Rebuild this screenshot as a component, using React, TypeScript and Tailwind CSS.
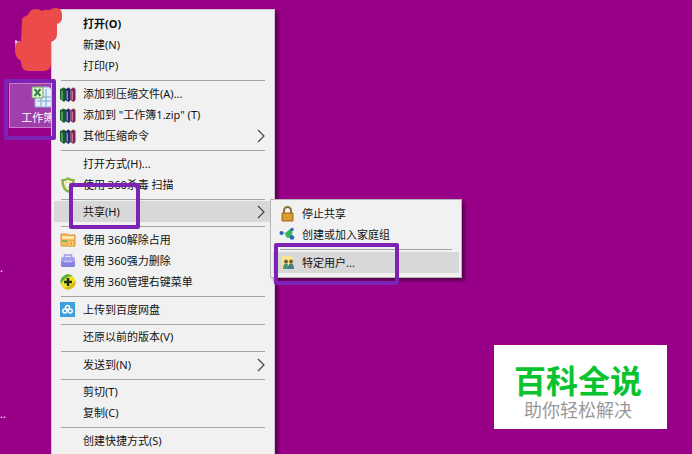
import React from "react";

type IconName = "books" | "shield" | "folder" | "shredder" | "plus" | "cloud" | "lock" | "network" | "users";

function Icon({ name }: { name: IconName }) {
  const common = { viewBox: "0 0 16 16", className: "size-4 shrink-0", "aria-hidden": true } as const;
  switch (name) {
    case "books":
      return (
        <svg {...common}>
          <path d="M0 3l4-2 2 2v11l-2 2-4-3z" fill="#1c5c2b" />
          <path d="M1 4l2 1.500v9L1 13z" fill="#4c9a55" />
          <path d="M5.500 3l3-2 2 2v11l-2 2-3-2z" fill="#20296c" />
          <path d="M6.500 4l1.500 1.500v9L6.500 13z" fill="#7d93cf" />
          <path d="M10.500 3l3-2 2 2v11l-2 2-3-2z" fill="#762a55" />
          <path d="M11.500 4L13 5.500v9L11.500 13z" fill="#d36d94" />
          <path d="M.5 2.500L4 1l1.500 1.500M6 2.500L8.500 1 10 2.500M11 2.500L13.500 1 15 2.500" fill="none" stroke="#dfe2d6" />
        </svg>
      );
    case "shield":
      return (
        <svg {...common}>
          <path d="M8 1.500c2 1.300 3.500 1.700 5.500 1.700 0 5.500-1 9-5.500 11.300C3.500 12.200 2.500 8.700 2.500 3.200c2 0 3.500-.4 5.500-1.700z" fill="#fbfbd8" stroke="#86b54a" strokeWidth="2.500" />
          <path d="M5.500 5.500h5v3L8 11 5.500 8.500z" fill="#fff" stroke="#d9dd7a" />
        </svg>
      );
    case "folder":
      return (
        <svg {...common}>
          <path d="M1 2h6l1 1h7v11H1z" fill="#f6bd62" stroke="#dd9136" />
          <path d="M2 5.500h12" stroke="#fff3cf" strokeWidth="2" />
          <path d="M2 9h5" stroke="#82b35c" strokeWidth="2" />
          <path d="M8 9h6v5H8z" fill="#ffe7b4" stroke="#e39c31" />
          <circle cx="11" cy="11.500" r="1.500" fill="#ef9b32" />
        </svg>
      );
    case "shredder":
      return (
        <svg {...common}>
          <path d="M4.500 5V2h7v3" fill="#e9e7ff" stroke="#a39fe8" strokeWidth="1.500" />
          <rect x="1" y="4" width="14" height="10" rx="2" fill="#a4a0f0" />
          <path d="M1 9h14v3a2 2 0 0 1-2 2H3a2 2 0 0 1-2-2z" fill="#8580df" />
          <path d="M4 8.500h8" stroke="#cbc8fb" strokeWidth="1.500" />
        </svg>
      );
    case "plus":
      return (
        <svg {...common}>
          <circle cx="8" cy="8" r="7.500" fill="#f4e02a" />
          <path d="M.8 10A7.500 7.500 0 0 1 13 2.400C8 2 3.500 5 .8 10z" fill="#55ad3a" />
          <path d="M15.200 6A7.500 7.500 0 0 1 3 13.600C8 14 12.500 11 15.200 6z" fill="#d7b91d" />
          <path d="M8 4v8M4 8h8" stroke="#12321a" strokeWidth="2.500" />
        </svg>
      );
    case "cloud":
      return (
        <svg {...common}>
          <path d="M0 0h15v15H0z" fill="#3d9fdb" />
          <g fill="none" stroke="#fff" strokeWidth="1.500">
            <circle cx="7.500" cy="5.500" r="2" />
            <circle cx="4.800" cy="9" r="2" />
            <circle cx="10.200" cy="9" r="2" />
          </g>
        </svg>
      );
    case "lock":
      return (
        <svg {...common}>
          <path d="M5 8V4.500a3.500 3.500 0 0 1 7 0V8" fill="none" stroke="#8e7038" strokeWidth="2" />
          <path d="M3 7h11v8H3z" fill="#cf8c1f" stroke="#a56c18" />
          <path d="M4 9h9M4 11h9M4 13h9" stroke="#e8b04a" />
        </svg>
      );
    case "network":
      return (
        <svg {...common}>
          <path d="M2 6h6M8 7l5-4M8 8l5 3" stroke="#7fbcc9" />
          <circle cx="2.500" cy="6" r="2" fill="#2764ae" />
          <path d="M6 6.500l5-4.500 2.500 3-1 6-5-.5z" fill="#35b356" />
          <circle cx="13" cy="2.500" r="1.800" fill="#2b72b5" />
          <circle cx="13" cy="10.500" r="2.300" fill="#236ab6" />
        </svg>
      );
    case "users":
      return (
        <svg {...common}>
          <path d="M3 1h9l2 2v11H3z" fill="#f8e58e" />
          <circle cx="7" cy="6.500" r="2" fill="#6f6048" />
          <circle cx="12" cy="6.500" r="2" fill="#7a5a44" />
          <path d="M4 14c0-3.500 1-5.500 3-5.500s3 2 3 5.500z" fill="#4c9477" />
          <path d="M9 14c0-3.500 1-5.500 3-5.500s3 2 3 5.500z" fill="#417d8d" />
        </svg>
      );
  }
}

function MenuItem({ label, icon, bold, submenu, active }: { label: string; icon?: IconName; bold?: boolean; submenu?: boolean; active?: boolean }) {
  return (
    <button type="button" role="menuitem" aria-haspopup={submenu ? "menu" : undefined}
      className={`flex h-[21px] w-full items-center gap-[7px] pr-[7px] pl-[6px] text-left text-[11px] leading-4 whitespace-nowrap text-[#111] ${bold ? "font-bold" : ""} ${active ? "bg-[#d8d8d8]" : "hover:bg-[#e4e4e4]"}`}>
      <span className="flex size-4 shrink-0 items-center">{icon && <Icon name={icon} />}</span>
      <span className="grow">{label}</span>
      {submenu && (
        <svg viewBox="0 0 8 14" className="h-[14px] w-2" fill="none" stroke="#444" strokeWidth="1.200" aria-hidden="true">
          <path d="M1 1l6 6-6 6" />
        </svg>
      )}
    </button>
  );
}

function Separator({ tight }: { tight?: boolean }) {
  return (
    <div role="separator" className={`px-[7px] pt-1 ${tight ? "pb-px" : "pb-[2px]"}`}>
      <div className="h-px bg-[#a3a3a3]" />
    </div>
  );
}

function Highlight({ className }: { className: string }) {
  return <div aria-hidden="true" className={`pointer-events-none absolute rounded-xs border-4 border-[#7c22b4] ${className}`} />;
}

export default function App() {
  return (
    <main className="relative h-screen overflow-hidden bg-[#980088] font-['Noto_Sans','Noto_Sans_CJK_SC',sans-serif]">
      <button type="button" className="absolute top-[83px] left-[9px] flex h-[45px] w-16 flex-col items-center border border-[#c57fca] bg-[#a03fab] text-[11px] leading-4 text-white">
        <svg viewBox="0 0 24 24" className="size-6" aria-hidden="true">
          <path d="M8 3h12l4 4v16H6V8z" fill="#e4eefb" stroke="#8aaddc" />
          <path d="M8 13h15M8 17h15M12 9v13M17 5v17" stroke="#75a5d8" />
          <path d="M3 3h11v11H3z" fill="#e9f5df" stroke="#6aa65b" />
          <path d="M5.500 5l6 7M11.500 5l-6 7" stroke="#31853a" strokeWidth="2" />
        </svg>
        <span className="mt-[2px]">工作簿1</span>
      </button>
      <span className="absolute top-[260px] left-0 text-[11px] leading-4 text-white">.</span>
      <span className="absolute top-[406px] left-0 text-[11px] leading-4 text-white">..</span>

      <div role="menu" aria-label="文件" className="absolute top-[9px] left-[51px] w-56 border border-[#d0c8d0] bg-[#f1f1f1] px-[2px] py-[3px] shadow-[3px_3px_3px_#0006]">
        <MenuItem label="打开(O)" bold />
        <MenuItem label="新建(N)" />
        <MenuItem label="打印(P)" />
        <Separator />
        <MenuItem label="添加到压缩文件(A)..." icon="books" />
        <MenuItem label={'添加到 "工作簿1.zip" (T)'} icon="books" />
        <MenuItem label="其他压缩命令" icon="books" submenu />
        <Separator />
        <MenuItem label="打开方式(H)..." />
        <MenuItem label="使用 360杀毒 扫描" icon="shield" />
        <Separator tight />
        <MenuItem label="共享(H)" submenu active />
        <Separator />
        <MenuItem label="使用 360解除占用" icon="folder" />
        <MenuItem label="使用 360强力删除" icon="shredder" />
        <MenuItem label="使用 360管理右键菜单" icon="plus" />
        <Separator />
        <MenuItem label="上传到百度网盘" icon="cloud" />
        <Separator tight />
        <MenuItem label="还原以前的版本(V)" />
        <Separator />
        <MenuItem label="发送到(N)" submenu />
        <Separator tight />
        <MenuItem label="剪切(T)" />
        <MenuItem label="复制(C)" />
        <Separator />
        <MenuItem label="创建快捷方式(S)" />
      </div>

      <div role="menu" aria-label="共享" className="absolute top-[199px] left-[270px] w-48 border border-[#b5b5b5] bg-[#f1f1f1] px-[2px] pt-[3px] pb-1 shadow-[3px_3px_3px_#0006]">
        <MenuItem label="停止共享" icon="lock" />
        <MenuItem label="创建或加入家庭组" icon="network" />
        <Separator />
        <MenuItem label="特定用户..." icon="users" active />
      </div>

      <svg viewBox="0 0 64 76" className="pointer-events-none absolute top-0 left-0 h-[76px] w-16" aria-hidden="true">
        <path d="M15 42h5M16 40v8M48 63h3M49 59v6" stroke="#fff" />
        <path d="M22 22q-1-5 6-7 2-6 8-6 4 0 6 2 3-2 8-1 2-2 6-2 6 0 6 7v4q-1 4-5 5v10q0 6-6 8v22q0 7-8 7H28q-6 0-7-8v-2q-6-3-6-11 0-7 6-9z" fill="#ec4b4b" />
      </svg>
      <Highlight className="top-[79px] left-1 h-[61px] w-[52px]" />
      <Highlight className="top-[183px] left-[69px] h-[46px] w-[71px]" />
      <Highlight className="top-[243px] left-[274px] h-[42px] w-[125px]" />

      <aside className="absolute right-[25px] bottom-[25px] bg-white pt-4 pr-[25px] pb-2 pl-5 text-center font-['Noto_Sans_CJK_SC',sans-serif] whitespace-nowrap">
        <p className="text-[32px] leading-9 font-bold text-[#09c32f]">百科全说</p>
        <p className="text-[18px] leading-6 text-[#999]">助你轻松解决</p>
      </aside>
    </main>
  );
}
